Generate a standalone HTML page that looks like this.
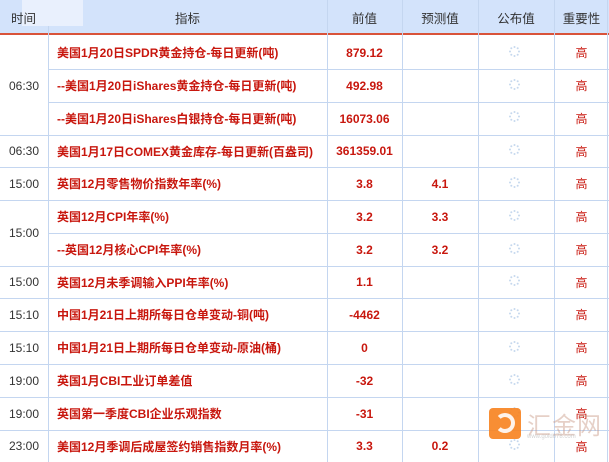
<!DOCTYPE html>
<html><head><meta charset="utf-8"><style>
*{margin:0;padding:0;box-sizing:border-box}
html,body{width:609px;height:462px;overflow:hidden}
body{background:#fff;font-family:"Liberation Sans","Noto Sans CJK SC",sans-serif;position:relative}
.hd{position:absolute;top:0;left:0;width:609px;height:35px;background:#d3e3fb;border-bottom:2px solid #d9533a}
.c{position:absolute;font-size:12px;display:flex;align-items:center}
.h{color:#333;font-size:12.5px;justify-content:center;height:35px;top:0}
.vl{position:absolute;top:0;width:1px;height:462px;background:#c4d6f0}
.hl{position:absolute;height:1px;background:#c4d6f0}
.t{color:#333;justify-content:center;left:0;width:48px;font-size:12px}
.n{color:#c8170e;font-weight:bold;left:57px;font-size:12px}
.v{color:#c8170e;font-weight:bold;justify-content:center;font-size:12px}
.sp{position:absolute;left:509px;width:11px;height:11px}
</style></head><body>
<div class="hd"></div>
<div style="position:absolute;left:22px;top:0;width:61px;height:26px;background:#e9f0fd"></div>
<div class="vl" style="left:48px;top:26px;height:436px"></div>
<div class="vl" style="left:327px"></div>
<div class="vl" style="left:402px"></div>
<div class="vl" style="left:478px"></div>
<div class="vl" style="left:554px"></div>
<div class="vl" style="left:607px"></div>
<div class="c h" style="left:0;width:48px;justify-content:flex-start;padding-left:11px;height:35px">时间</div>
<div class="c h" style="left:48px;width:279px">指标</div>
<div class="c h" style="left:327px;width:75px">前值</div>
<div class="c h" style="left:402px;width:76px">预测值</div>
<div class="c h" style="left:478px;width:76px">公布值</div>
<div class="c h" style="left:554px;width:55px">重要性</div>

<div class="hl" style="left:48px;width:561px;top:69px"></div>
<div class="hl" style="left:48px;width:561px;top:102px"></div>
<div class="hl" style="left:0;width:609px;top:135px"></div>
<div class="hl" style="left:0;width:609px;top:167px"></div>
<div class="hl" style="left:0;width:609px;top:200px"></div>
<div class="hl" style="left:48px;width:561px;top:233px"></div>
<div class="hl" style="left:0;width:609px;top:266px"></div>
<div class="hl" style="left:0;width:609px;top:298px"></div>
<div class="hl" style="left:0;width:609px;top:331px"></div>
<div class="hl" style="left:0;width:609px;top:364px"></div>
<div class="hl" style="left:0;width:609px;top:397px"></div>
<div class="hl" style="left:0;width:609px;top:430px"></div>

<div class="c t" style="top:36px;height:99px">06:30</div>
<div class="c t" style="top:135px;height:32px">06:30</div>
<div class="c t" style="top:167px;height:33px">15:00</div>
<div class="c t" style="top:200px;height:66px">15:00</div>
<div class="c t" style="top:266px;height:32px">15:00</div>
<div class="c t" style="top:298px;height:33px">15:10</div>
<div class="c t" style="top:331px;height:33px">15:10</div>
<div class="c t" style="top:364px;height:33px">19:00</div>
<div class="c t" style="top:397px;height:33px">19:00</div>
<div class="c t" style="top:430px;height:32px">23:00</div>

<div class="c n" style="top:36px;height:33px">美国1月20日SPDR黄金持仓-每日更新(吨)</div>
<div class="c n" style="top:69px;height:33px">--美国1月20日iShares黄金持仓-每日更新(吨)</div>
<div class="c n" style="top:102px;height:33px">--美国1月20日iShares白银持仓-每日更新(吨)</div>
<div class="c n" style="top:135px;height:32px">美国1月17日COMEX黄金库存-每日更新(百盎司)</div>
<div class="c n" style="top:167px;height:33px">英国12月零售物价指数年率(%)</div>
<div class="c n" style="top:200px;height:33px">英国12月CPI年率(%)</div>
<div class="c n" style="top:233px;height:33px">--英国12月核心CPI年率(%)</div>
<div class="c n" style="top:266px;height:32px">英国12月未季调输入PPI年率(%)</div>
<div class="c n" style="top:298px;height:33px">中国1月21日上期所每日仓单变动-铜(吨)</div>
<div class="c n" style="top:331px;height:33px">中国1月21日上期所每日仓单变动-原油(桶)</div>
<div class="c n" style="top:364px;height:33px">英国1月CBI工业订单差值</div>
<div class="c n" style="top:397px;height:33px">英国第一季度CBI企业乐观指数</div>
<div class="c n" style="top:430px;height:32px">美国12月季调后成屋签约销售指数月率(%)</div>

<div class="c v" style="left:327px;width:75px;top:36px;height:33px">879.12</div>
<div class="c v" style="left:327px;width:75px;top:69px;height:33px">492.98</div>
<div class="c v" style="left:327px;width:75px;top:102px;height:33px">16073.06</div>
<div class="c v" style="left:327px;width:75px;top:135px;height:32px">361359.01</div>
<div class="c v" style="left:327px;width:75px;top:167px;height:33px">3.8</div>
<div class="c v" style="left:327px;width:75px;top:200px;height:33px">3.2</div>
<div class="c v" style="left:327px;width:75px;top:233px;height:33px">3.2</div>
<div class="c v" style="left:327px;width:75px;top:266px;height:32px">1.1</div>
<div class="c v" style="left:327px;width:75px;top:298px;height:33px">-4462</div>
<div class="c v" style="left:327px;width:75px;top:331px;height:33px">0</div>
<div class="c v" style="left:327px;width:75px;top:364px;height:33px">-32</div>
<div class="c v" style="left:327px;width:75px;top:397px;height:33px">-31</div>
<div class="c v" style="left:327px;width:75px;top:430px;height:32px">3.3</div>
<div class="c v" style="left:402px;width:76px;top:167px;height:33px">4.1</div>
<div class="c v" style="left:402px;width:76px;top:200px;height:33px">3.3</div>
<div class="c v" style="left:402px;width:76px;top:233px;height:33px">3.2</div>
<div class="c v" style="left:402px;width:76px;top:430px;height:32px">0.2</div>

<svg width="0" height="0" style="position:absolute;top:0;left:0"><defs><g id="s" fill="#c6d8ee"><circle cx="5.5" cy="1" r="1"/><circle cx="8.7" cy="2.3" r="1"/><circle cx="10" cy="5.5" r="1"/><circle cx="8.7" cy="8.7" r="1"/><circle cx="5.5" cy="10" r="1"/><circle cx="2.3" cy="8.7" r="1"/><circle cx="1" cy="5.5" r="1"/><circle cx="2.3" cy="2.3" r="1"/></g></defs></svg>
<svg class="sp" style="top:46px"><use href="#s"/></svg>
<svg class="sp" style="top:79px"><use href="#s"/></svg>
<svg class="sp" style="top:111px"><use href="#s"/></svg>
<svg class="sp" style="top:144px"><use href="#s"/></svg>
<svg class="sp" style="top:177px"><use href="#s"/></svg>
<svg class="sp" style="top:210px"><use href="#s"/></svg>
<svg class="sp" style="top:243px"><use href="#s"/></svg>
<svg class="sp" style="top:275px"><use href="#s"/></svg>
<svg class="sp" style="top:308px"><use href="#s"/></svg>
<svg class="sp" style="top:341px"><use href="#s"/></svg>
<svg class="sp" style="top:374px"><use href="#s"/></svg>
<svg class="sp" style="top:407px"><use href="#s"/></svg>
<svg class="sp" style="top:439px"><use href="#s"/></svg>

<div class="c v" style="left:554px;width:55px;top:36px;height:33px;font-weight:normal">高</div>
<div class="c v" style="left:554px;width:55px;top:69px;height:33px;font-weight:normal">高</div>
<div class="c v" style="left:554px;width:55px;top:102px;height:33px;font-weight:normal">高</div>
<div class="c v" style="left:554px;width:55px;top:135px;height:32px;font-weight:normal">高</div>
<div class="c v" style="left:554px;width:55px;top:167px;height:33px;font-weight:normal">高</div>
<div class="c v" style="left:554px;width:55px;top:200px;height:33px;font-weight:normal">高</div>
<div class="c v" style="left:554px;width:55px;top:233px;height:33px;font-weight:normal">高</div>
<div class="c v" style="left:554px;width:55px;top:266px;height:32px;font-weight:normal">高</div>
<div class="c v" style="left:554px;width:55px;top:298px;height:33px;font-weight:normal">高</div>
<div class="c v" style="left:554px;width:55px;top:331px;height:33px;font-weight:normal">高</div>
<div class="c v" style="left:554px;width:55px;top:364px;height:33px;font-weight:normal">高</div>
<div class="c v" style="left:554px;width:55px;top:397px;height:33px;font-weight:normal">高</div>
<div class="c v" style="left:554px;width:55px;top:430px;height:32px;font-weight:normal">高</div>

<div style="position:absolute;left:489px;top:408px;width:32px;height:31px;background:#f7821e;border-radius:4px;opacity:.9"></div>
<div style="position:absolute;left:495px;top:413px;width:20px;height:20px;border-radius:50%;border:4px solid #fff;border-left-color:transparent;opacity:.9"></div>
<div style="position:absolute;left:527px;top:406px;font-size:24px;color:rgba(200,150,130,.45);letter-spacing:1px">汇金网</div>
<div style="position:absolute;left:527px;top:434px;font-size:6px;color:rgba(180,180,180,.6)">www.gold678.com</div>
</body></html>
